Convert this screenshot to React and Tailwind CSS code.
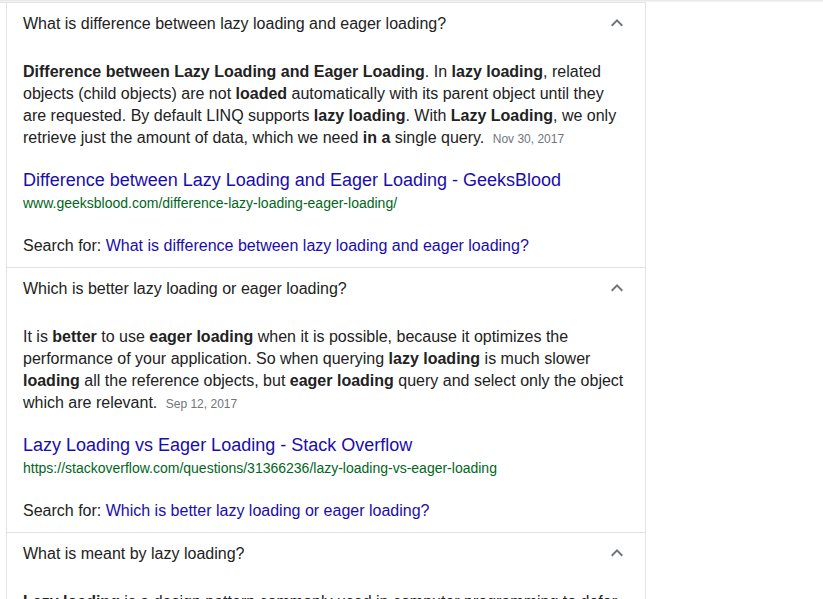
import React from "react";

const Chevron = () => (
  <svg width="24" height="24" viewBox="0 0 24 24" className="shrink-0 -my-[1px]">
    <path d="M7.41 15.41L12 10.83l4.59 4.58L18 14l-6-6-6 6z" fill="#70757a" />
  </svg>
);

const B = ({ children }) => <b className="font-bold text-[#222]">{children}</b>;

const Section = ({ q, answer, date, title, url, search }) => (
  <div className="border-t border-[#e3e3e3] px-4 pt-[10px] pb-[10px]">
    <div className="flex h-[22px] items-center justify-between leading-[22px] text-[16px] text-[#222]">
      <span>{q}</span>
      <span className="-mt-[2px] flex">
        <Chevron />
      </span>
    </div>
    <div className="mt-[26px] text-[16px] leading-[22px] text-[#222]">
      {answer}
      {date && (
        <>
          {" "}
          <span className="pl-[4px] text-[12px] leading-none text-[#70757a]">{date}</span>
        </>
      )}
    </div>
    {title && (
      <>
        <div className="mt-[19px] text-[18px] leading-[24px] text-[#1a0dab]">{title}</div>
        <div className="text-[14px] leading-[22px] text-[#006621]">{url}</div>
        <div className="mt-[21px] text-[16px] leading-[22px] text-[#222]">
          Search for: <span className="text-[#1a0dab]">{search}</span>
        </div>
      </>
    )}
  </div>
);

export default function App() {
  return (
    <div
      className="relative h-[599px] w-[823px] overflow-hidden bg-white"
      style={{ fontFamily: '"Liberation Sans", Arial, sans-serif' }}
    >
      <div className="h-[2px] w-full bg-gradient-to-b from-[#e6e6e6] to-[#f6f6f6]" />
      <div className="w-[646px] border-t border-[#e3e3e3] pl-[6px]">
        <div className="w-[640px] border-x border-[#e3e3e3] -mt-px">
          <Section
            q="What is difference between lazy loading and eager loading?"
            answer={
              <>
                <B>Difference between Lazy Loading and Eager Loading</B>. In <B>lazy loading</B>, related
                objects (child objects) are not <B>loaded</B> automatically with its parent object until they
                are requested. By default LINQ supports <B>lazy loading</B>. With <B>Lazy Loading</B>, we only
                retrieve just the amount of data, which we need <B>in a</B> single query.
              </>
            }
            date="Nov 30, 2017"
            title="Difference between Lazy Loading and Eager Loading - GeeksBlood"
            url="www.geeksblood.com/difference-lazy-loading-eager-loading/"
            search="What is difference between lazy loading and eager loading?"
          />
          <Section
            q="Which is better lazy loading or eager loading?"
            answer={
              <>
                It is <B>better</B> to use <B>eager loading</B> when it is possible, because it optimizes the
                performance of your application. So when querying <B>lazy loading</B> is much slower{" "}
                <B>loading</B> all the reference objects, but <B>eager loading</B> query and select only the object
                which are relevant.
              </>
            }
            date="Sep 12, 2017"
            title="Lazy Loading vs Eager Loading - Stack Overflow"
            url="https://stackoverflow.com/questions/31366236/lazy-loading-vs-eager-loading"
            search="Which is better lazy loading or eager loading?"
          />
          <Section
            q="What is meant by lazy loading?"
            answer={
              <>
                <B>Lazy loading</B> is a design pattern commonly used in computer programming to defer
                initialization of an object until the point at which it is needed.
              </>
            }
          />
        </div>
      </div>
    </div>
  );
}
